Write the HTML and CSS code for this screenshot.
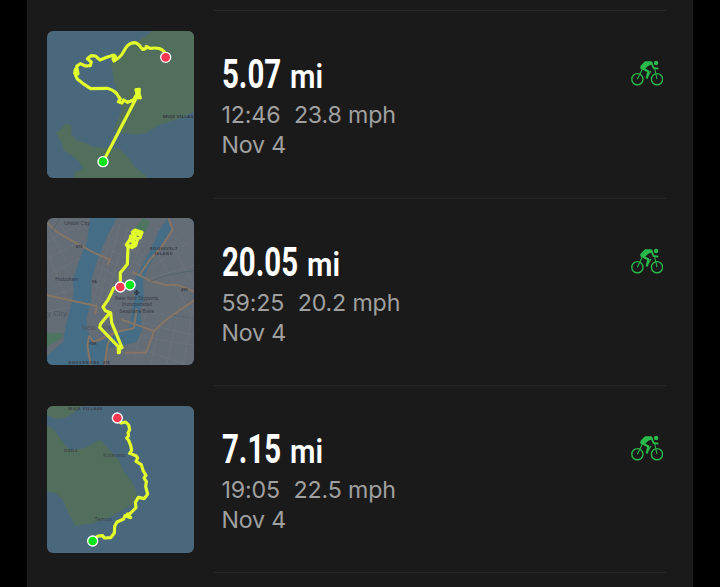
FILE: index.html
```
<!DOCTYPE html>
<html lang="en">
<head>
  <meta charset="UTF-8" />
  <meta name="viewport" content="width=device-width, initial-scale=1.0"/>
  <title>Activities</title>
  <link rel="stylesheet" href="styles.css">
</head>
<body>

  <!-- shared bike icon -->
  <svg class="defs" width="0" height="0">
    <symbol id="bike" viewBox="0 0 32 26">
      <g fill="none" stroke="currentColor" stroke-linejoin="round">
        <circle cx="6.4" cy="19.2" r="5.6" stroke-width="1.4"/>
        <circle cx="26" cy="19.2" r="5.6" stroke-width="1.4"/>
        <path d="M10.4 7.8 L17.4 11.6 L15.8 18.4" stroke-width="2.3"/>
        <path d="M20.4 2.8 L22.6 8 L27.4 8.6" stroke-width="1.9"/>
        <path d="M11 9.8 L6.4 19.2 M20 11 L17 16 M23.8 9 L26 19.2" stroke-width="1.1"/>
      </g>
      <path d="M14 1.2 L20.4 1.2 Q22.4 2.6 21 4.2 L17 6 L13.4 9.6 L10.4 9.4 Q8.4 8 9.6 5.8 Z" fill="currentColor"/>
      <circle cx="25.1" cy="3" r="2.2" fill="currentColor"/>
    </symbol>
  </svg>

  <main class="feed">

    <article class="activity">
      <svg class="map" viewBox="21 21 441 441">
        <rect class="water" x="21" y="21" width="441" height="441"/>
        <path class="land" d="M336 21 L462 21 L462 262 L430 280 L388 293 L350 306 L320 326 L292 331 L250 328 L222 315 L232 290 L245 262 L238 215 L222 170 L214 120 L230 90 L255 75 L285 55 L318 36 Z"/>
        <path class="land" d="M48 326 L64 316 L70 303 L82 298 L95 305 L94 330 L108 348 L135 356 L158 368 L190 372 L240 374 L264 400 L285 430 L325 462 L100 462 L105 445 L130 434 L118 415 L98 395 L72 380 L62 350 Z"/>
        <text class="label bold" x="368" y="282" textLength="93" lengthAdjust="spacingAndGlyphs">MUJE VILLAG</text>
        <path class="route" d="M376 88 C366 72 352 70 330 73 L319 67 L317 74 L308 76 C300 68 296 56 282 56 C264 57 258 70 250 84 C244 98 232 105 222 111 L219 105 L226 97 L222 93 L200 100 L180 108 L166 96 L153 95 L142 104 L154 114 L151 125 L136 126 L121 119 L110 127 L114 150 L104 148 L106 136 L107 155 L112 165 L128 178 L152 194 L202 193 C220 198 232 208 237 220 L241 225 L235 233 L246 237 L251 228 L263 235 L280 228 L291 210 L288 197 L298 196 L297 208 L301 222 L290 220 L190 412"/>
        <circle class="finish" cx="377" cy="100" r="15"/>
        <circle class="start" cx="189" cy="413" r="15"/>
      </svg>
      <div class="info">
        <div class="stats">
          <h2 class="distance"><span class="number">5.07</span><span class="unit">mi</span></h2>
          <p class="detail"><span>12:46</span><span>23.8 mph</span></p>
          <p class="detail">Nov 4</p>
        </div>
        <svg class="sport"><use href="#bike"/></svg>
      </div>
    </article>

    <article class="activity">
      <svg class="map" viewBox="21 18 441 441">
        <rect class="city" x="21" y="18" width="441" height="441"/>
        <g class="streets">
          <path d="M21 90 L150 20 M21 140 L110 95 M21 190 L120 140 M21 255 L105 230 M21 300 L90 285 M45 18 L100 90 M30 60 L80 150 M22 120 L75 250"/>
          <path d="M205 30 L160 180 M222 30 L160 270 M240 35 L165 310 M265 45 L185 300 M285 90 L210 285 M310 80 L220 300 M335 85 L275 190 M195 70 L310 130 M185 100 L300 160 M175 130 L285 190 M170 160 L265 210 M165 190 L250 235 M162 220 L235 255 M155 250 L260 300"/>
          <path d="M350 50 L462 110 M330 170 L462 80 M330 200 L462 160 M355 130 L450 300 M390 90 L462 220 M305 300 L462 320 M300 330 L462 370 M280 370 L462 400 M270 400 L440 459 M320 290 L280 450 M370 300 L330 459 M420 270 L380 459 M462 270 L430 459"/>
        </g>
        <path class="river" d="M150 18 L230 18 L205 65 L188 105 L170 150 L154 205 L153 275 L140 315 L142 360 L175 390 L200 410 L192 459 L21 459 L21 430 L70 390 L75 350 L88 300 L102 240 L98 205 L118 145 L142 85 Z"/>
        <path class="river" d="M382 18 L398 50 L372 85 L345 130 L323 170 L309 210 L312 265 L300 290 L307 355 L290 390 L240 402 L185 410 L175 390 L225 370 L268 345 L276 300 L285 250 L281 210 L307 160 L334 110 L352 65 Z"/>
        <path class="park" d="M309 18 L329 30 L317 61 L284 50 Z M21 362 L72 364 L61 382 L21 404 Z"/>
        <path class="road" d="M21 32 L50 60 L110 94 L166 124 L210 142 L202 158 M21 250 L90 265 L170 282 L166 306 M399 50 L365 105 L330 142 L298 190 L276 180 M298 190 L335 208 L380 219 L410 218 L462 239 M462 266 L422 292 L375 326 L342 357 L243 322 M342 357 L329 394 L318 422 L254 422 M148 370 L160 390 L230 360 L282 348 L290 290 M148 370 L142 400 L152 459 M217 365 L202 400 L194 459 M385 20 L398 52"/>
        <path class="road thin" d="M330 208 L380 190 L462 175 M260 370 L220 400 M60 18 L35 60 M462 320 L400 310"/>
        <g class="label city-label">
          <text x="72" y="38" textLength="78" lengthAdjust="spacingAndGlyphs">Union City</text>
          <text x="46" y="208" textLength="68" lengthAdjust="spacingAndGlyphs">Hoboken</text>
          <text class="pale big" x="22" y="311" textLength="59" lengthAdjust="spacingAndGlyphs">y City</text>
          <text class="pale big" x="125" y="353" textLength="89" lengthAdjust="spacingAndGlyphs">New York</text>
          <text x="225" y="263" textLength="130" lengthAdjust="spacingAndGlyphs">New York Skyports</text>
          <text x="246" y="283" textLength="90" lengthAdjust="spacingAndGlyphs">Incorporated</text>
          <text x="239" y="303" textLength="103" lengthAdjust="spacingAndGlyphs">Seaplane Base</text>
        </g>
        <g class="label bold">
          <text x="330" y="115" textLength="82">ROOSEVELT</text>
          <text x="344" y="130" textLength="54">ISLAND</text>
          <text x="85" y="455" textLength="92">GOVERNORS</text>
          <text x="107" y="107">475</text>
          <text x="155" y="212">9A</text>
          <text x="423" y="236">495</text>
          <text x="147" y="400">FDR</text>
          <text x="188" y="457">278</text>
        </g>
        <path class="plane" d="M289 234 L291 234 L292 239 L298 243 L292 242 L291 246 L294 248 L287 248 L289 245 L288 242 L282 243 L288 239 Z"/>
        <path class="route" d="M270 218 L241 224 L241 182 L262 157 L264 105 L259 98 L270 82 L272 72 L281 72 L277 60 L285 54 L306 61 L300 78 L287 79 L282 65 L301 67 M276 72 L292 84 L287 101 L276 107 L261 98 L268 85 L287 92 M281 78 L279 98 L269 104 M241 224 L221 228 L205 262 L189 285 L196 296 L212 302 L215 332 L246 407 L234 403 L179 346 L182 335 L208 304 M234 403 L240 405 L238 422 L235 422 L235 408"/>
        <circle class="finish" cx="241" cy="225" r="15"/>
        <circle class="start" cx="270" cy="219" r="15"/>
      </svg>
      <div class="info">
        <div class="stats">
          <h2 class="distance"><span class="number long">20.05</span><span class="unit">mi</span></h2>
          <p class="detail"><span>59:25</span><span>20.2 mph</span></p>
          <p class="detail">Nov 4</p>
        </div>
        <svg class="sport"><use href="#bike"/></svg>
      </div>
    </article>

    <article class="activity">
      <svg class="map" viewBox="21 18 441 441">
        <rect class="water" x="21" y="18" width="441" height="441"/>
        <path class="land" d="M21 18 L125 18 L103 38 L75 54 L48 57 L21 46 Z"/>
        <path class="land" d="M21 75 L45 92 L60 116 L90 151 L138 143 L166 126 L180 120 L198 137 L216 158 L238 182 L248 209 L274 244 L290 274 L286 310 L250 328 L208 353 L150 372 L106 378 L86 340 L68 300 L50 281 L21 274 Z"/>
        <g class="label">
          <text class="bold" x="85" y="30" textLength="102">MUJE VILLAGE</text>
          <text class="bold" x="72" y="156" textLength="39">USILI</text>
          <text x="190" y="172" textLength="68">Kulavanu</text>
          <text x="164" y="364" textLength="51">Temuo</text>
        </g>
        <path class="route" d="M232 54 L243 69 L257 66 L266 75 L269 89 L264 98 L266 107 L260 114 L266 121 L272 136 L275 151 L269 160 L288 167 L293 174 L288 184 L304 194 L309 211 L318 226 L312 233 L319 245 L317 260 L323 282 L313 296 L295 292 L286 307 L288 323 L270 341 L262 342 L272 353 L255 347 L251 357 L231 366 L224 379 L223 399 L212 413 L193 414 L188 407 L174 408 L158 422"/>
        <circle class="finish" cx="232" cy="54" r="15"/>
        <circle class="start" cx="158" cy="423" r="15"/>
      </svg>
      <div class="info">
        <div class="stats">
          <h2 class="distance"><span class="number">7.15</span><span class="unit">mi</span></h2>
          <p class="detail"><span>19:05</span><span>22.5 mph</span></p>
          <p class="detail">Nov 4</p>
        </div>
        <svg class="sport"><use href="#bike"/></svg>
      </div>
    </article>

  </main>

</body>
</html>
```
FILE: styles.css
```
* {
  box-sizing: border-box;
  margin: 0;
  padding: 0;
}

body {
  background: #000;
  color: #fff;
  font-family: Inter, sans-serif;
  overflow: hidden;
}

.defs {
  display: block;
}

.feed {
  width: 666px;
  height: 587px;
  margin: 0 auto;
  padding: 10px 27px 0 20px;
  background: #1a1a1a;
}

.activity {
  display: flex;
  gap: 20px;
  height: 187.5px;
}

.map {
  width: 147px;
  height: 147px;
  margin-top: 20.5px;
  border-radius: 6px;
  flex-shrink: 0;
}

.info {
  flex: 1;
  display: flex;
  justify-content: space-between;
  border-top: 1px solid #272727;
  padding: 42px 3.5px 0 7.5px;
}

.activity:last-child .info {
  border-bottom: 1px solid #272727;
}

/* distance, squeezed to get condensed figures */
.distance {
  display: flex;
  align-items: baseline;
  height: 47px;
  font-family: Roboto, sans-serif;
  font-weight: bold;
  line-height: 43px;
}

.number {
  width: 68.5px;
  font-size: 40px;
  transform: scaleX(0.735);
  transform-origin: left;
}

.number.long {
  width: 85.5px;
}

.unit {
  font-size: 32.5px;
  font-weight: 600;
  transform: scaleX(0.9);
  transform-origin: left;
}

.detail {
  display: flex;
  gap: 13.5px;
  color: #a0a0a0;
  font-size: 23.2px;
  line-height: 30px;
  letter-spacing: -0.15px;
  white-space: nowrap;
}

.sport {
  width: 32px;
  height: 26px;
  margin-top: 7px;
  color: #2ab94b;
}

/* maps */
.water {
  fill: #49687c;
}

.land {
  fill: #526e5c;
}

.city {
  fill: #646c75;
}

.river {
  fill: #456d85;
}

.park {
  fill: #4d7561;
}

.streets {
  fill: none;
  stroke: #6f767f;
  stroke-width: 2;
}

.road {
  fill: none;
  stroke: #867565;
  stroke-width: 6;
  stroke-linejoin: round;
}

.thin {
  stroke: #56666d;
  stroke-width: 3;
}

.label {
  fill: #383b48;
  font-family: "Noto Sans", sans-serif;
  font-size: 14px;
}

.city-label {
  font-size: 14px;
}

.bold {
  font-size: 12px;
  font-weight: bold;
}

.big {
  font-size: 23px;
}

.pale {
  fill: #4d5662;
}

.plane {
  fill: #303642;
  stroke: #303642;
  stroke-width: 2;
}

.route {
  fill: none;
  stroke: #e2ff2c;
  stroke-width: 9.5;
  stroke-linejoin: round;
  stroke-linecap: round;
}

.start,
.finish {
  stroke: #fff;
  stroke-width: 4;
}

.start {
  fill: #0be51b;
}

.finish {
  fill: #fc3850;
}
```
